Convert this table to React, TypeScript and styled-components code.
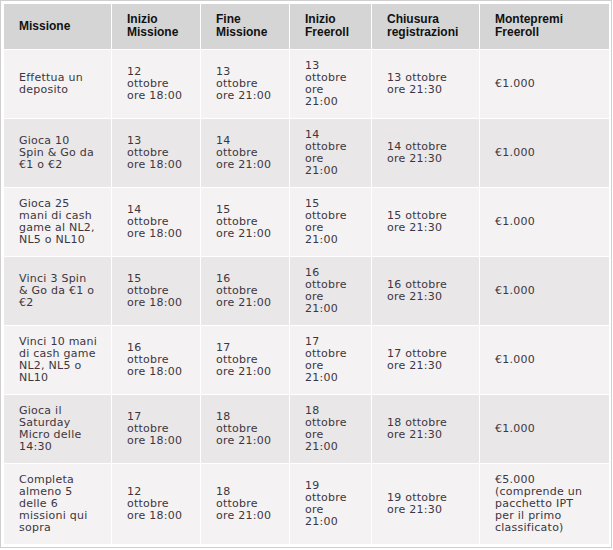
import React from 'react'
import styled, { createGlobalStyle } from 'styled-components'

const GlobalStyle = createGlobalStyle`
  html, body {
    margin: 0;
    padding: 0;
    background: #ffffff;
  }
`

const Frame = styled.div`
  width: 612px;
  box-sizing: border-box;
  border: 1px solid #cfcfcf;
  padding: 2px;
  background: #ffffff;
`

const Table = styled.table`
  width: 607px;
  table-layout: fixed;
  border-collapse: separate;
  border-spacing: 1px;
`

const HeadCell = styled.th`
  background: #d5d5d5;
  color: #111111;
  font-family: 'Liberation Sans', Arial, sans-serif;
  font-size: 12px;
  font-weight: bold;
  line-height: 13px;
  text-align: left;
  vertical-align: middle;
  padding: 9px 4px 10px 15px;
  white-space: nowrap;
`

const Row = styled.tr<{ $alt: boolean }>`
  background: ${({ $alt }) => ($alt ? '#e9e7e8' : '#f4f2f3')};
`

const Cell = styled.td`
  color: #3d3640;
  font-family: 'DejaVu Sans', Verdana, sans-serif;
  font-size: 11px;
  letter-spacing: 0.25px;
  line-height: 12px;
  text-align: left;
  vertical-align: middle;
  padding: 10px 4px 10px 15px;
  white-space: nowrap;
`

const widths = [107, 88, 88, 81, 107, 129]

const headers = [
  ['Missione'],
  ['Inizio', 'Missione'],
  ['Fine', 'Missione'],
  ['Inizio', 'Freeroll'],
  ['Chiusura', 'registrazioni'],
  ['Montepremi', 'Freeroll'],
]

type Mission = {
  text: string[]
  start: number
  end: number
  freeroll: number
  prize: string[]
}

const missions: Mission[] = [
  { text: ['Effettua un', 'deposito'], start: 12, end: 13, freeroll: 13, prize: ['€1.000'] },
  { text: ['Gioca 10', 'Spin & Go da', '€1 o €2'], start: 13, end: 14, freeroll: 14, prize: ['€1.000'] },
  { text: ['Gioca 25', 'mani di cash', 'game al NL2,', 'NL5 o NL10'], start: 14, end: 15, freeroll: 15, prize: ['€1.000'] },
  { text: ['Vinci 3 Spin', '& Go da €1 o', '€2'], start: 15, end: 16, freeroll: 16, prize: ['€1.000'] },
  { text: ['Vinci 10 mani', 'di cash game', 'NL2, NL5 o', 'NL10'], start: 16, end: 17, freeroll: 17, prize: ['€1.000'] },
  { text: ['Gioca il', 'Saturday', 'Micro delle', '14:30'], start: 17, end: 18, freeroll: 18, prize: ['€1.000'] },
  {
    text: ['Completa', 'almeno 5', 'delle 6', 'missioni qui', 'sopra'],
    start: 12,
    end: 18,
    freeroll: 19,
    prize: ['€5.000', '(comprende un', 'pacchetto IPT', 'per il primo', 'classificato)'],
  },
]

const Lines = ({ lines }: { lines: string[] }) => (
  <>
    {lines.map((line, i) => (
      <React.Fragment key={i}>
        {i > 0 && <br />}
        {line}
      </React.Fragment>
    ))}
  </>
)

const App = () => {
  return (
    <>
      <GlobalStyle />
      <Frame>
        <Table>
          <colgroup>
            {widths.map((w, i) => (
              <col key={i} style={{ width: w }} />
            ))}
          </colgroup>
          <thead>
            <tr>
              {headers.map((h, i) => (
                <HeadCell key={i}>
                  <Lines lines={h} />
                </HeadCell>
              ))}
            </tr>
          </thead>
          <tbody>
            {missions.map((m, i) => (
              <Row key={i} $alt={i % 2 === 1}>
                <Cell>
                  <Lines lines={m.text} />
                </Cell>
                <Cell>
                  <Lines lines={[`${m.start}`, 'ottobre', 'ore 18:00']} />
                </Cell>
                <Cell>
                  <Lines lines={[`${m.end}`, 'ottobre', 'ore 21:00']} />
                </Cell>
                <Cell>
                  <Lines lines={[`${m.freeroll}`, 'ottobre', 'ore', '21:00']} />
                </Cell>
                <Cell>
                  <Lines lines={[`${m.freeroll} ottobre`, 'ore 21:30']} />
                </Cell>
                <Cell>
                  <Lines lines={m.prize} />
                </Cell>
              </Row>
            ))}
          </tbody>
        </Table>
      </Frame>
    </>
  )
}

export default App
